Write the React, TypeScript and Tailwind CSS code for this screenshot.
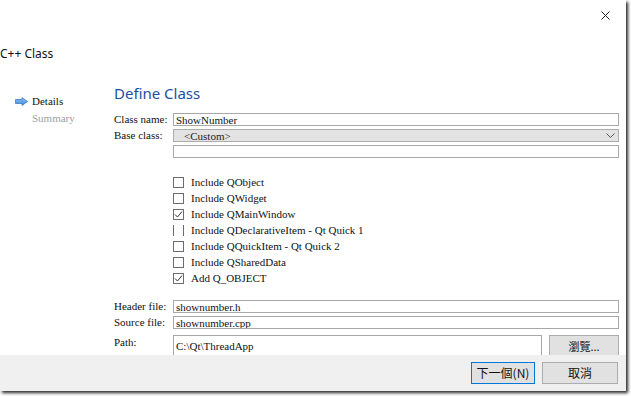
import React from "react";

const serif = { fontFamily: '"Liberation Serif", "Noto Sans CJK TC", serif' };

function Check({ state }: { state: "off" | "on" | "broken" }) {
  if (state === "broken") {
    return <span className="w-[11px] h-[11px] border-x border-[#6b6b6b] shrink-0" />;
  }
  return (
    <span className="w-[11px] h-[11px] border border-[#6b6b6b] bg-white shrink-0 flex items-center justify-center">
      {state === "on" && (
        <svg width="9" height="9" viewBox="0 0 9 9">
          <path d="M1 4.5 L3.5 7 L8 1.5" fill="none" stroke="#333" strokeWidth="1" />
        </svg>
      )}
    </span>
  );
}

function Field({ label, value }: { label: string; value: string }) {
  return (
    <div className="flex h-[13px] items-center">
      <span className="w-[59px] shrink-0 text-[11px] leading-[13px] text-[#111]" style={serif}>
        {label}
      </span>
      <div className="flex-1 h-[13px] border border-[#a8a8a8] bg-white px-[2px] text-[11px] leading-[12px] text-[#111] overflow-hidden" style={serif}>
        {value}
      </div>
    </div>
  );
}

const options: { label: string; state: "off" | "on" | "broken" }[] = [
  { label: "Include QObject", state: "off" },
  { label: "Include QWidget", state: "off" },
  { label: "Include QMainWindow", state: "on" },
  { label: "Include QDeclarativeItem - Qt Quick 1", state: "broken" },
  { label: "Include QQuickItem - Qt Quick 2", state: "off" },
  { label: "Include QSharedData", state: "off" },
  { label: "Add Q_OBJECT", state: "on" },
];

export default function App() {
  return (
    <div className="w-[631px] h-[396px] bg-white overflow-hidden">
      <div className="w-[626px] h-[391px] bg-white flex flex-col shadow-[2px_2px_3px_rgba(0,0,0,0.85)]">
        {/* title area */}
        <div className="h-[36px] flex justify-end pt-[11px] pr-[16px]">
          <svg width="9" height="9" viewBox="0 0 9 9">
            <path d="M0.5 0.5 L8.5 8.5 M8.5 0.5 L0.5 8.5" stroke="#222" strokeWidth="1" />
          </svg>
        </div>
        <div
          className="h-[44px] pt-[9px] text-[12px] leading-[17px] text-[#111]"
          style={{ fontFamily: '"Noto Sans", sans-serif' }}
        >
          C++ Class
        </div>

        {/* body */}
        <div className="flex h-[275px] overflow-hidden">
          <div className="w-[114px] shrink-0 pt-[13px] pl-[15px] text-[11px] leading-[17px]" style={serif}>
            <div className="flex items-center gap-[4px]">
              <svg width="13" height="9" viewBox="0 0 13 9">
                <defs>
                  <linearGradient id="ar" x1="0" y1="0" x2="0" y2="1">
                    <stop offset="0" stopColor="#8cc2f2" />
                    <stop offset="1" stopColor="#3f8ad8" />
                  </linearGradient>
                </defs>
                <path d="M0.5 2.5 H7 V0.5 L12.5 4.5 L7 8.5 V6.5 H0.5 Z" fill="url(#ar)" stroke="#3b7fc9" strokeWidth="0.8" />
              </svg>
              <span className="text-[#111]">Details</span>
            </div>
            <div className="pl-[17px] text-[#a0a0a0]">Summary</div>
          </div>

          <div className="flex-1 pr-[7px]">
            <div
              className="pt-[1px] text-[15px] leading-[24px] text-[#1c4fa3]"
              style={{ fontFamily: '"Noto Sans", sans-serif' }}
            >
              Define Class
            </div>

            <div className="mt-[8px] flex flex-col gap-[3px]">
              <Field label="Class name:" value="ShowNumber" />
              <div className="flex h-[13px] items-center">
                <span className="w-[59px] shrink-0 text-[11px] leading-[13px] text-[#111]" style={serif}>
                  Base class:
                </span>
                <div className="flex-1 h-[13px] border border-[#acacac] bg-[#e3e3e3] pl-[10px] pr-[3px] flex items-center justify-between text-[11px] leading-[12px] text-[#222]" style={serif}>
                  <span>&lt;Custom&gt;</span>
                  <svg width="9" height="5" viewBox="0 0 9 5">
                    <path d="M0.5 0.5 L4.5 4.5 L8.5 0.5" fill="none" stroke="#555" strokeWidth="1" />
                  </svg>
                </div>
              </div>
              <div className="flex h-[13px]">
                <span className="w-[59px] shrink-0" />
                <div className="flex-1 h-[13px] border border-[#a8a8a8] bg-white" />
              </div>
            </div>

            <div className="mt-[16px] pl-[59px] flex flex-col">
              {options.map((o) => (
                <div key={o.label} className="h-[16px] flex items-center gap-[7px]">
                  <Check state={o.state} />
                  <span className="text-[11px] leading-[16px] text-[#111]" style={serif}>
                    {o.label}
                  </span>
                </div>
              ))}
            </div>

            <div className="mt-[14px] flex flex-col gap-[3px]">
              <Field label="Header file:" value="shownumber.h" />
              <Field label="Source file:" value="shownumber.cpp" />
              <div className="flex mt-[3px]">
                <span className="w-[59px] shrink-0 text-[11px] leading-[13px] pt-[1px] text-[#111]" style={serif}>
                  Path:
                </span>
                <div className="w-[369px] h-[22px] border border-[#a8a8a8] bg-white px-[2px] pt-[3px] text-[11px] leading-[14px] text-[#111]" style={serif}>
                  C:\Qt\ThreadApp
                </div>
                <div
                  className="ml-[7px] flex-1 h-[22px] border border-[#adadad] bg-[#e1e1e1] flex items-center justify-center text-[11px] text-[#111]"
                  style={{ fontFamily: '"Noto Sans CJK TC", sans-serif' }}
                >
                  瀏覽...
                </div>
              </div>
            </div>
          </div>
        </div>

        {/* footer */}
        <div
          className="flex-1 bg-[#f0f0f0] flex justify-end items-start pt-[7px] pr-[8px] gap-[7px] text-[12px] text-[#111]"
          style={{ fontFamily: '"Noto Sans CJK TC", sans-serif' }}
        >
          <div className="w-[64px] h-[22px] border border-[#0078d7] bg-[#e1e1e1] flex items-center justify-center">
            下一個(N)
          </div>
          <div className="w-[76px] h-[22px] border border-[#adadad] bg-[#e1e1e1] flex items-center justify-center">
            取消
          </div>
        </div>
      </div>
    </div>
  );
}
